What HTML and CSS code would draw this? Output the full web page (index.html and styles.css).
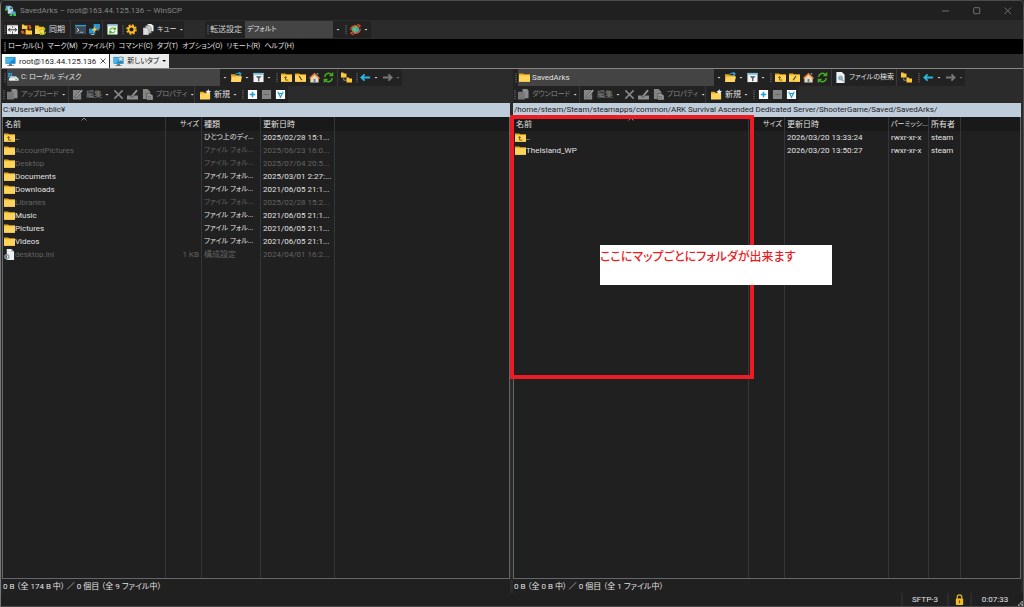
FILE: index.html
```html
<!DOCTYPE html>
<html lang="ja">
<head>
<meta charset="utf-8">
<title>SavedArks – root@163.44.125.136 – WinSCP</title>
<link rel="stylesheet" href="styles.css">
</head>
<body>
<svg class="defs" aria-hidden="true">
  <symbol id="app" viewBox="0 0 12 12"><rect x="1" y="1" width="5" height="4" fill="#7ebbe5" stroke="#2d6fa5" stroke-width=".7"/><path d="M4 5V3.800a2 2 0 0 1 4 0V5" fill="none" stroke="#d8e4ea" stroke-width="1"/><rect x="3" y="4.500" width="6" height="5" fill="#bdd5e5"/><rect x="7" y="7" width="4.500" height="3.500" fill="#4aa8df"/><path d="M0 4h3v2H0zM5 10h3v2H5zM10 9h2v3h-3z" fill="#48c93e"/></symbol>
  <symbol id="split" viewBox="0 0 12 12"><rect x="0" y="1" width="12" height="10" fill="#f4f4f4"/><path d="M0 1h12v1.500H0z" fill="#b5bcc0"/><path d="M6 2.500v2M6 8v3" stroke="#444" stroke-width=".8"/><path d="M1.500 6.300h9M3.500 4.300l-2 2 2 2M8.500 4.300l2 2-2 2" fill="none" stroke="#222" stroke-width="1"/></symbol>
  <symbol id="syncdirs" viewBox="0 0 12 12"><path d="M1 .500h2l1 1h3v4H1zM5 6h2l1 1h4v4.500H5z" fill="#ffc93a"/><path d="M7 2h3v3M11 3.500L10 5 8.500 3.500M4 10H1.500V7.500M0 9l1.500-1.500L3 9" fill="none" stroke="#e05a16" stroke-width="1.500"/></symbol>
  <symbol id="syncfold" viewBox="0 0 12 12"><path d="M0 1.500h4l1 1.500h5v8H0z" fill="#f3b81f"/><path d="M0 5h10v6H0z" fill="#ffd65a"/><path d="M5 8a3 3 0 0 1 5-2M11.500 8.500a3 3 0 0 1-5 2M10.500 4v2.300H8.500M6 12V10h2" fill="none" stroke="#a4c820" stroke-width="1.300"/></symbol>
  <symbol id="term" viewBox="0 0 12 12"><rect y="1" width="12" height="10" fill="#3d4b59"/><rect y="1" width="12" height="1.500" fill="#2f9bd0"/><path d="M2 4.500l2.300 2L2 8.500" fill="none" stroke="#e5edf2"/><path d="M5 9h4" stroke="#aab5bd"/></symbol>
  <symbol id="putty" viewBox="0 0 12 12"><rect x="5" y="0" width="7" height="5.500" fill="#2b8fd0"/><rect x="0" y="5" width="7" height="5.500" fill="#2b8fd0"/><path d="M8 6.500h3M2 11.500h4" stroke="#b9c4cc"/><path d="M8 1L3 7h3l-2 4 5-6H6z" fill="#ffd22e"/></symbol>
  <symbol id="refreshbox" viewBox="0 0 12 12"><rect x=".5" y=".5" width="11" height="11" fill="#f5f8f1"/><path d="M.5.500h11v2H.5z" fill="#9bc8e0"/><path d="M3 6.500C4 4 7 4 8.500 5M9 7.500C8 10 5 10 3.500 9M9 3.500V6H7M3 10.500V8h2" fill="none" stroke="#48b12b" stroke-width="1.200"/></symbol>
  <symbol id="gear" viewBox="0 0 12 12"><circle cx="6" cy="6" r="4.800" fill="none" stroke="#f6b51e" stroke-width="2" stroke-dasharray="2 1.770"/><circle cx="6" cy="6" r="3.300" fill="none" stroke="#f9bd27" stroke-width="2"/></symbol>
  <symbol id="copies" viewBox="0 0 12 12"><path d="M5 0h4l2.500 2v6H5z" fill="#eee"/><path d="M2.500 2H7l2 2v6H2.500z" fill="#ccc" stroke="#555" stroke-width=".5"/><path d="M0 4h4l2.500 2v6H0z" fill="#ddd" stroke="#555" stroke-width=".5"/></symbol>
  <symbol id="globe" viewBox="0 0 12 12"><circle cx="6" cy="6" r="4" fill="#35a9d7"/><path d="M4 3l3-.500 1 2-2 1 1 2-1.500 2L3 7z" fill="#58c455"/><path d="M1 7C.5 4 3 1 8 1.800M11 5c.5 3-2 6-7 5.200M8 0l3 2-3 2.500M4 12l-3-2 3-2.500" fill="none" stroke="#e24c17" stroke-width="1.400"/></symbol>
  <symbol id="monitor" viewBox="0 0 12 12"><rect x=".5" y="1" width="11" height="7.500" fill="#168acb"/><path d="M1 1.500h10L4 8H1z" fill="#4bb5e8"/><path d="M4.500 8.500h3v1.500h2v1h-7v-1h2z" fill="#65727a"/></symbol>
  <symbol id="monitornew" viewBox="0 0 12 12"><rect x=".5" y="1" width="11" height="7.500" fill="#168acb"/><path d="M1 1.500h6L4 8H1z" fill="#4bb5e8"/><path d="M4.500 8.500h3v1.500h2v1h-7v-1h2z" fill="#65727a"/><path d="M8.500 0l1 2 2.300.3-1.600 1.500.4 2.200-2.100-1L6.400 6l.4-2.200L5.200 2.300 7.500 2z" fill="#d3d9dc" stroke="#8b969c" stroke-width=".4"/></symbol>
  <symbol id="drive" viewBox="0 0 12 12"><path d="M0 1h2v2H0zM2.500 1h2v2h-2zM0 3.500h2v2H0zM2.500 3.500h2v2h-2z" fill="#23a8e8"/><path d="M3 4.500h6l2.500 3H1z" fill="#cbd3d7"/><rect x="1" y="7" width="10.500" height="2.500" fill="#eef1f2"/><path d="M8 8.300h2" stroke="#3cad49"/></symbol>
  <symbol id="folder" viewBox="0 0 12 12"><path d="M0 1.500h4.500l1 1H12V10.500H0z" fill="#e9ab18"/><path d="M0 3.500h12v7H0z" fill="#ffd45c"/></symbol>
  <symbol id="folderup" viewBox="0 0 12 12"><path d="M0 1.500h4.500l1 1H12V10.500H0z" fill="#e9ab18"/><path d="M0 3.500h12v7H0z" fill="#ffd45c"/><path d="M5 5v3.800h3M3.500 6.500L5 5l1.500 1.500" fill="none" stroke="#6f5311" stroke-width="1"/></symbol>
  <symbol id="folderroot" viewBox="0 0 12 12"><path d="M0 1.500h4.500l1 1H12V10.500H0z" fill="#e9ab18"/><path d="M0 3.500h12v7H0z" fill="#ffd45c"/><path d="M4.500 4.500l3 4.500" stroke="#594006" stroke-width="1.200"/></symbol>
  <symbol id="folderslash" viewBox="0 0 12 12"><path d="M0 1.500h4.500l1 1H12V10.500H0z" fill="#e9ab18"/><path d="M0 3.500h12v7H0z" fill="#ffd45c"/><path d="M7.500 4.500l-3 4.500" stroke="#594006" stroke-width="1.200"/></symbol>
  <symbol id="openfolder" viewBox="0 0 12 12"><path d="M0 2.500h4l1 1h6v7.500H0z" fill="#e3a318"/><path d="M1.500 5H12l-1.500 6H0z" fill="#ffd568"/><path d="M5 3c1-2 3-2 5-1M8.500 0L11 2 8.500 4" fill="none" stroke="#2799ce" stroke-width="1.300"/></symbol>
  <symbol id="filter" viewBox="0 0 12 12"><rect x=".5" y="1" width="11" height="10" fill="#f3f3f3"/><path d="M.5 1h11v2H.5z" fill="#72bddd"/><path d="M3 4.500h6.500L7 7.200v3H5.500v-3z" fill="#51616b"/></symbol>
  <symbol id="home" viewBox="0 0 12 12"><path d="M1.500 5.500L6 1.500l4.500 4v6h-9z" fill="#f0d7b2"/><path d="M0 6.500L6 .8l6 5.700-1 1-5-4.500-5 4.500z" fill="#e47a31"/><path d="M5 7.500h2v4H5z" fill="#3a89b8"/><path d="M8.500 1H10v2.500L8.500 2z" fill="#5aa5d0"/></symbol>
  <symbol id="reload" viewBox="0 0 12 12"><path d="M2 5.500A4.200 4.200 0 0 1 9.500 3M10 6.500A4.200 4.200 0 0 1 2.500 9M10.500.500v3.300H7M1.500 11.500V8.200H5" fill="none" stroke="#46ad1e" stroke-width="1.500"/></symbol>
  <symbol id="tree" viewBox="0 0 12 12"><path d="M0 .5h2.500l.5 1h3V6H0zM6 6h2.500l.5 1h3v4.500H6z" fill="#ffc83a"/><path d="M3 6v3h3" fill="none" stroke="#a6a6a6" stroke-width=".8"/></symbol>
  <symbol id="back" viewBox="0 0 12 12"><path d="M1.500 6H11M5 2.500L1.500 6 5 9.500" fill="none" stroke="#28b5dc" stroke-width="2"/></symbol>
  <symbol id="forward" viewBox="0 0 12 12"><path d="M1 6h9.500M7 2.500L10.500 6 7 9.500" fill="none" stroke="#777" stroke-width="2"/></symbol>
  <symbol id="find" viewBox="0 0 12 12"><path d="M1.500 0h6l3 3v9h-9z" fill="#eff2f4"/><circle cx="6" cy="6.500" r="2.200" fill="#79bedb" stroke="#8b969c" stroke-width=".8"/><path d="M7.500 8l2 2.500" stroke="#8b969c" stroke-width="1.200"/></symbol>
  <symbol id="transfer" viewBox="0 0 12 12"><path d="M5 0h5l1.500 2v8H5z" fill="#8b8b8b"/><path d="M0 3h6l1.500 2v6.500H0z" fill="#777"/></symbol>
  <symbol id="edit" viewBox="0 0 12 12"><path d="M1 1h9v10.500H1z" fill="#858585"/><path d="M3 8.500L10.500.500 12 2 5 9.500z" fill="#aaa" stroke="#333" stroke-width=".7"/></symbol>
  <symbol id="cross" viewBox="0 0 12 12"><path d="M1.500 1.500l9 9M10.500 1.500l-9 9" stroke="#878787" stroke-width="1.700"/></symbol>
  <symbol id="rename" viewBox="0 0 12 12"><path d="M0 7h12v4.500H0z" fill="#8b8b8b"/><path d="M4 8l6-7.500L12 2 6 9z" fill="#999" stroke="#333" stroke-width=".7"/></symbol>
  <symbol id="props" viewBox="0 0 12 12"><path d="M1 0h5l3 3v8H1z" fill="#858585"/><path d="M5 5h4l3 2v5H5z" fill="#9a9a9a" stroke="#333" stroke-width=".5"/><path d="M6 8h4M6 10h4" stroke="#555" stroke-width=".7"/></symbol>
  <symbol id="newfolder" viewBox="0 0 12 12"><path d="M0 3h4l1 1h6v7H0z" fill="#e9ab18"/><path d="M0 5h11v6.500H0z" fill="#ffd45c"/><path d="M9 0l.8 2 2.200.2-1.500 1.500.4 2.300L9 5 7.200 6l.3-2.300L6 2.200 8.200 2z" fill="#eee"/></symbol>
  <symbol id="plus" viewBox="0 0 12 12"><path d="M1 1h10v10H1z" fill="#fff"/><path d="M6 3v6M3 6h6" stroke="#1c9fd3" stroke-width="1.700"/></symbol>
  <symbol id="minus" viewBox="0 0 12 12"><path d="M1 1h10v10H1z" fill="#858585"/><path d="M3 6h6" stroke="#666" stroke-width="1"/></symbol>
  <symbol id="invert" viewBox="0 0 12 12"><path d="M1 1h10v10H1z" fill="#fff"/><path d="M3 3l3 6 3-6M4 5h4" fill="none" stroke="#1c9fd3" stroke-width="1.200"/></symbol>
  <symbol id="inifile" viewBox="0 0 12 12"><path d="M3 0h5l3 3v9H3z" fill="#edf1f4"/><path d="M8 0v3h3" fill="#aab3b9"/><circle cx="3.200" cy="8.500" r="2.200" fill="none" stroke="#94a0a8" stroke-width="1.600"/></symbol>
  <symbol id="lock" viewBox="0 0 12 12"><path d="M3.500 6V3.500a2.500 2.500 0 0 1 5 0V6" fill="none" stroke="#e2b72e" stroke-width="1.300"/><rect x="2" y="5" width="8" height="7" rx="1" fill="#f5bd24"/><path d="M6 7v3" stroke="#704d00" stroke-width="1.300"/></symbol>
</svg>

<div class="window">
  <header class="titlebar">
    <svg class="icon"><use href="#app"/></svg>
    <h1 class="title">SavedArks – root@163.44.125.136 – WinSCP</h1>
    <div class="window-buttons">
      <button aria-label="最小化"><svg viewBox="0 0 8 8"><path d="M0 4h7"/></svg></button>
      <button aria-label="最大化"><svg viewBox="0 0 8 8"><rect x=".7" y=".7" width="6" height="6" rx=".7"/></svg></button>
      <button aria-label="閉じる"><svg viewBox="0 0 8 8"><path d="M.5.500l6.500 6.500M7 .500L.5 7"/></svg></button>
    </div>
  </header>

  <div class="toolbar main-toolbar">
    <i class="grip"></i>
    <button aria-label="比較"><svg class="icon"><use href="#split"/></svg></button>
    <button aria-label="ディレクトリの同期"><svg class="icon"><use href="#syncdirs"/></svg></button>
    <button><svg class="icon"><use href="#syncfold"/></svg>同期</button>
    <i class="sep"></i>
    <button aria-label="ターミナル"><svg class="icon"><use href="#term"/></svg></button>
    <button aria-label="PuTTY"><svg class="icon"><use href="#putty"/></svg></button>
    <i class="sep"></i>
    <button aria-label="更新"><svg class="icon"><use href="#refreshbox"/></svg></button>
    <i class="grip"></i>
    <button aria-label="環境設定"><svg class="icon"><use href="#gear"/></svg></button>
    <button class="kana"><svg class="icon"><use href="#copies"/></svg>キュー<i class="caret push"></i></button>
    <i class="gap"></i>
    <i class="grip"></i>
    <label for="preset">転送設定</label>
    <div class="combo"><select id="preset" class="kana"><option>デフォルト</option></select><i class="caret"></i></div>
    <i class="grip"></i>
    <button aria-label="ブラウズの同期"><svg class="icon"><use href="#globe"/></svg><i class="caret"></i></button>
  </div>

  <nav class="menubar kana">
    <i class="grip"></i>
    <button>ローカル(L)</button><button>マーク(M)</button><button>ファイル(F)</button><button>コマンド(C)</button><button>タブ(T)</button><button>オプション(O)</button><button>リモート(R)</button><button>ヘルプ(H)</button>
  </nav>

  <div class="tabs">
    <button class="tab active"><svg class="icon"><use href="#monitor"/></svg>root@163.44.125.136<svg class="close" viewBox="0 0 6 6"><path d="M.5.500l5 5M5.500.500l-5 5"/></svg></button>
    <button class="tab kana"><svg class="icon"><use href="#monitornew"/></svg>新しいタブ<i class="caret dark"></i></button>
  </div>

  <main class="panes">
    <section class="pane">
      <div class="toolbar nav-toolbar">
        <i class="grip"></i>
        <div class="combo"><svg class="icon"><use href="#drive"/></svg><select class="kana" aria-label="ドライブ"><option>C: ローカル ディスク</option></select><i class="caret"></i></div>
        <button aria-label="開く"><svg class="icon"><use href="#openfolder"/></svg><i class="caret"></i></button>
        <button aria-label="フィルター"><svg class="icon"><use href="#filter"/></svg><i class="caret"></i></button>
        <i class="grip"></i>
        <button aria-label="親ディレクトリ"><svg class="icon"><use href="#folderup"/></svg></button>
        <button aria-label="ルート"><svg class="icon"><use href="#folderroot"/></svg></button>
        <button aria-label="ホーム"><svg class="icon"><use href="#home"/></svg></button>
        <button aria-label="更新"><svg class="icon"><use href="#reload"/></svg></button>
        <i class="sep"></i>
        <button aria-label="ツリー"><svg class="icon"><use href="#tree"/></svg></button>
        <i class="grip"></i>
        <button aria-label="戻る"><svg class="icon"><use href="#back"/></svg><i class="caret"></i></button>
        <button aria-label="進む"><svg class="icon"><use href="#forward"/></svg><i class="caret dim"></i></button>
      </div>
      <div class="toolbar file-toolbar">
        <i class="grip"></i>
        <button class="off kana"><svg class="icon"><use href="#transfer"/></svg>アップロード<i class="caret push"></i></button>
        <i class="sep"></i>
        <button class="off"><svg class="icon"><use href="#edit"/></svg>編集<i class="caret push"></i></button>
        <button aria-label="削除"><svg class="icon"><use href="#cross"/></svg></button>
        <button aria-label="名前の変更"><svg class="icon"><use href="#rename"/></svg></button>
        <button class="off kana"><svg class="icon"><use href="#props"/></svg>プロパティ<i class="caret push"></i></button>
        <i class="sep"></i>
        <button><svg class="icon"><use href="#newfolder"/></svg>新規<i class="caret push"></i></button>
        <i class="grip"></i>
        <button aria-label="選択"><svg class="icon"><use href="#plus"/></svg></button>
        <button aria-label="選択解除"><svg class="icon"><use href="#minus"/></svg></button>
        <button aria-label="選択の反転"><svg class="icon"><use href="#invert"/></svg></button>
      </div>
      <div class="path">C:¥Users¥Public¥</div>
      <div class="listing">
        <table class="files local">
          <colgroup><col class="c-name"><col class="c-size"><col class="c-kind"><col class="c-date"><col></colgroup>
          <thead><tr><th class="sorted">名前<svg class="sort" viewBox="0 0 6 4"><path d="M.5 3.500L3 1l2.500 2.500"/></svg></th><th class="num kana">サイズ</th><th>種類</th><th>更新日時</th><th></th></tr></thead>
          <tbody>
            <tr><td><span class="entry"><svg class="icon"><use href="#folderup"/></svg>..</span></td><td></td><td class="kana">ひとつ上のディ...</td><td>2025/02/28 15:1...</td><td></td></tr>
            <tr class="hidden-file"><td><span class="entry"><svg class="icon"><use href="#folder"/></svg>AccountPictures</span></td><td></td><td class="kana">ファイル フォル...</td><td>2025/06/23 16:0...</td><td></td></tr>
            <tr class="hidden-file"><td><span class="entry"><svg class="icon"><use href="#folder"/></svg>Desktop</span></td><td></td><td class="kana">ファイル フォル...</td><td>2025/07/04 20:5...</td><td></td></tr>
            <tr><td><span class="entry"><svg class="icon"><use href="#folder"/></svg>Documents</span></td><td></td><td class="kana">ファイル フォル...</td><td>2025/03/01 2:27:...</td><td></td></tr>
            <tr><td><span class="entry"><svg class="icon"><use href="#folder"/></svg>Downloads</span></td><td></td><td class="kana">ファイル フォル...</td><td>2021/06/05 21:1...</td><td></td></tr>
            <tr class="hidden-file"><td><span class="entry"><svg class="icon"><use href="#folder"/></svg>Libraries</span></td><td></td><td class="kana">ファイル フォル...</td><td>2025/02/28 15:2...</td><td></td></tr>
            <tr><td><span class="entry"><svg class="icon"><use href="#folder"/></svg>Music</span></td><td></td><td class="kana">ファイル フォル...</td><td>2021/06/05 21:1...</td><td></td></tr>
            <tr><td><span class="entry"><svg class="icon"><use href="#folder"/></svg>Pictures</span></td><td></td><td class="kana">ファイル フォル...</td><td>2021/06/05 21:1...</td><td></td></tr>
            <tr><td><span class="entry"><svg class="icon"><use href="#folder"/></svg>Videos</span></td><td></td><td class="kana">ファイル フォル...</td><td>2021/06/05 21:1...</td><td></td></tr>
            <tr class="hidden-file"><td><span class="entry"><svg class="icon"><use href="#inifile"/></svg>desktop.ini</span></td><td class="num">1 KB</td><td>構成設定</td><td>2024/04/01 16:2...</td><td></td></tr>
            <tr class="filler"><td></td><td></td><td></td><td></td><td></td></tr>
          </tbody>
        </table>
      </div>
      <div class="pane-status">0 B （全 174 B 中） ／ 0 個目 （全 9 ファイル中）</div>
    </section>

    <section class="pane remote-pane">
      <div class="toolbar nav-toolbar remote-nav">
        <i class="grip"></i>
        <div class="combo"><svg class="icon"><use href="#folder"/></svg><select aria-label="ディレクトリ"><option>SavedArks</option></select><i class="caret"></i></div>
        <button aria-label="開く"><svg class="icon"><use href="#openfolder"/></svg><i class="caret"></i></button>
        <button aria-label="フィルター"><svg class="icon"><use href="#filter"/></svg><i class="caret"></i></button>
        <i class="grip"></i>
        <button aria-label="親ディレクトリ"><svg class="icon"><use href="#folderup"/></svg></button>
        <button aria-label="ルート"><svg class="icon"><use href="#folderslash"/></svg></button>
        <button aria-label="ホーム"><svg class="icon"><use href="#home"/></svg></button>
        <button aria-label="更新"><svg class="icon"><use href="#reload"/></svg></button>
        <i class="sep"></i>
        <button class="kana"><svg class="icon"><use href="#find"/></svg>ファイルの検索</button>
        <i class="sep"></i>
        <button aria-label="ツリー"><svg class="icon"><use href="#tree"/></svg></button>
        <i class="grip"></i>
        <button aria-label="戻る"><svg class="icon"><use href="#back"/></svg><i class="caret"></i></button>
        <button aria-label="進む"><svg class="icon"><use href="#forward"/></svg><i class="caret dim"></i></button>
      </div>
      <div class="toolbar file-toolbar">
        <i class="grip"></i>
        <button class="off kana"><svg class="icon"><use href="#transfer"/></svg>ダウンロード<i class="caret push"></i></button>
        <i class="sep"></i>
        <button class="off"><svg class="icon"><use href="#edit"/></svg>編集<i class="caret push"></i></button>
        <button aria-label="削除"><svg class="icon"><use href="#cross"/></svg></button>
        <button aria-label="名前の変更"><svg class="icon"><use href="#rename"/></svg></button>
        <button class="off kana"><svg class="icon"><use href="#props"/></svg>プロパティ<i class="caret push"></i></button>
        <i class="sep"></i>
        <button><svg class="icon"><use href="#newfolder"/></svg>新規<i class="caret push"></i></button>
        <i class="grip"></i>
        <button aria-label="選択"><svg class="icon"><use href="#plus"/></svg></button>
        <button aria-label="選択解除"><svg class="icon"><use href="#minus"/></svg></button>
        <button aria-label="選択の反転"><svg class="icon"><use href="#invert"/></svg></button>
      </div>
      <div class="path">/home/steam/Steam/steamapps/common/ARK Survival Ascended Dedicated Server/ShooterGame/Saved/SavedArks/</div>
      <div class="listing">
        <table class="files remote">
          <colgroup><col class="c-name"><col class="c-size"><col class="c-date"><col class="c-perm"><col class="c-owner"><col></colgroup>
          <thead><tr><th class="sorted">名前<svg class="sort" viewBox="0 0 6 4"><path d="M.5 3.500L3 1l2.500 2.500"/></svg></th><th class="num kana">サイズ</th><th>更新日時</th><th class="kana">パーミッシ...</th><th>所有者</th><th></th></tr></thead>
          <tbody>
            <tr><td><span class="entry"><svg class="icon"><use href="#folderup"/></svg>..</span></td><td></td><td>2026/03/20 13:33:24</td><td>rwxr-xr-x</td><td>steam</td><td></td></tr>
            <tr><td><span class="entry"><svg class="icon"><use href="#folder"/></svg>TheIsland_WP</span></td><td></td><td>2026/03/20 13:50:27</td><td>rwxr-xr-x</td><td>steam</td><td></td></tr>
            <tr class="filler"><td></td><td></td><td></td><td></td><td></td><td></td></tr>
          </tbody>
        </table>
        <div class="highlight"></div>
        <p class="note">ここにマップごとにフォルダが出来ます</p>
      </div>
      <div class="pane-status">0 B （全 0 B 中） ／ 0 個目 （全 1 ファイル中）</div>
    </section>
  </main>

  <footer class="statusbar">
    <span class="protocol">SFTP-3</span>
    <span class="secure"><svg class="icon"><use href="#lock"/></svg></span>
    <span class="elapsed">0:07:33</span>
    <svg class="resize" viewBox="0 0 6 6"><path d="M4 0h2v2H4zM2 2h2v2H2zM4 3h2v3H4zM0 4h2v2H0z"/></svg>
  </footer>
</div>
</body>
</html>
```

FILE: styles.css
```css
* { box-sizing: border-box; }

body {
  margin: 0;
  background: #2b2b2b;
  color: #e0e0e0;
  font: 8px/13px Roboto, "Noto Sans CJK JP", sans-serif;
  font-feature-settings: "palt";
}

button, select {
  margin: 0;
  padding: 0;
  border: 0;
  background: none;
  color: inherit;
  font: inherit;
  font-feature-settings: inherit;
  white-space: nowrap;
}

.defs { position: absolute; width: 0; height: 0; }
.icon { width: 11px; height: 11px; flex: none; display: block; }
.kana { font-size: 7px; }

.window {
  display: flex;
  flex-direction: column;
  height: 100vh;
  border: 1px solid #4b4b4b;
  border-left-color: #777;
  border-radius: 5px 5px 0 0;
  background: #2b2b2b;
  overflow: hidden;
}

.titlebar {
  display: flex;
  align-items: center;
  gap: 4px;
  height: 19px;
  padding-left: 4px;
  background: #202020;
}
.title { margin: 0; flex: 1; font-size: 8px; font-weight: 400; color: #858585; }
.window-buttons { display: flex; }
.window-buttons button { width: 31px; height: 19px; display: grid; place-items: center; }
.window-buttons svg { width: 8px; height: 8px; fill: none; stroke: #6f6f6f; }

.toolbar { display: grid; grid-template-rows: 100%; justify-content: start; }
.toolbar > * { background: #222; }
.toolbar > .gap { background: none; }
.toolbar button { display: flex; align-items: center; gap: 3px; padding-left: 1px; }
.toolbar .off { color: #858585; }
.toolbar label { display: flex; align-items: center; color: #d0d0d0; }

.toolbar > .grip, .grip { background: repeating-linear-gradient(#484848 0 1px, #2b2b2b 1px 2px) center / 2px 10px no-repeat #222; }
.sep { border-left: 1px solid #383838; }
.caret {
  width: 4px;
  height: 2px;
  flex: none;
  background: #ddd;
  clip-path: polygon(0 0, 100% 0, 50% 100%);
}
.caret.dim { background: #777; }
.caret.dark { background: #111; }
.push { margin-left: auto; margin-right: 3px; }

.main-toolbar {
  grid-template-columns: 3px 14px 14px 36px 4px 14px 14px 4px 14px 5px 17px 42px 21px 5px 35px 98px 6px 22px;
  height: 19px;
  padding: 1px 0 1px 2px;
}

.combo { display: flex; align-items: center; padding-right: 3px; }
.combo select { flex: 1; align-self: stretch; padding-left: 2px; background: #444; appearance: none; outline: 0; }
.combo .icon { width: 12px; align-self: stretch; height: auto; background: #444; padding-left: 1px; }
.combo .caret { margin-left: 3px; }

.menubar { display: flex; align-items: stretch; gap: 4px; height: 15px; padding-left: 2px; background: #000; }
.menubar .grip { width: 3px; margin-right: -2px; background-color: #000; }

.tabs { display: flex; align-items: stretch; gap: 1px; height: 15px; padding-left: 1px; border-bottom: 1px solid #858585; }
.tab { display: flex; align-items: center; gap: 3px; padding: 0 3px; background: #eaeaea; color: #222; }
.tab.active { background: #fff; }
.close { width: 6px; height: 6px; margin-left: 1px; stroke: #555; fill: none; }

.panes { flex: 1; min-height: 0; display: grid; grid-template-columns: 1fr 1fr; gap: 3px; padding: 0 2px 0 1px; }
.pane { display: flex; flex-direction: column; min-width: 0; }

.nav-toolbar {
  grid-template-columns: 5px 223px 22px 21px 7px 14px 14px 14px 15px 3px 15px 4px 22px 21px;
  height: 17px;
}
.nav-toolbar.remote-nav {
  grid-template-columns: 5px 206px 22px 22px 6px 14px 14px 14px 15px 3px 62px 4px 16px 6px 22px 21px;
}
.file-toolbar {
  grid-template-columns: 4px 62px 3px 41px 14px 15px 53px 5px 41px 6px 14px 14px 14px;
  height: 17px;
}

.path { height: 14px; padding-left: 1px; background: #bfcddb; color: #222; white-space: nowrap; overflow: hidden; }

.listing {
  position: relative;
  flex: 1;
  min-height: 0;
  border: 1px solid #62676b;
  border-top: 0;
  background: #202020;
}
.files { width: 100%; height: 100%; table-layout: fixed; border-collapse: separate; border-spacing: 0; }
.files th, .files td { height: 13px; padding: 0 0 0 2px; border-right: 1px solid #33373a; text-align: left; font-weight: 400; white-space: nowrap; overflow: hidden; }
.files td:first-child { padding-left: 1px; }
.files th { height: 14px; background: #191919; }
.files th:last-child, .files td:last-child { border-right: 0; }
.files .num { padding-right: 2px; text-align: right; }
.files .filler td { height: auto; }
.files .sorted { position: relative; }
.sort { position: absolute; top: 0; left: 50%; width: 6px; height: 4px; margin-left: -3px; fill: none; stroke: #888; stroke-width: 1; }
.entry { display: flex; align-items: center; }
.hidden-file { color: #636363; }
.c-name { width: 163px; }
.c-size { width: 36px; }
.c-kind { width: 59px; }
.c-date { width: 74px; }
.remote .c-name { width: 235px; }
.remote .c-date { width: 104px; }
.c-perm { width: 40px; }
.c-owner { width: 32px; }

/* Annotation drawn over the remote listing */
.highlight { position: absolute; top: -2px; left: -4px; width: 244px; height: 264px; border: 4px solid #ed1c24; }
.note {
  position: absolute;
  top: 128px;
  left: 86px;
  width: 232px;
  height: 40px;
  margin: 0;
  padding-top: 4px;
  background: #fff;
  color: #ed1c24;
  font-size: 12px;
  font-weight: 500;
  line-height: 16px;
  white-space: nowrap;
}

.pane-status { height: 14px; padding: 1px 1px 0; background: #202020; white-space: nowrap; }

.statusbar { display: flex; align-items: stretch; justify-content: flex-end; height: 13px; background: #202020; }
.statusbar span { display: grid; place-items: center; border-left: 2px solid #2b2b2b; }
.protocol { width: 46px; }
.secure { width: 23px; }
.elapsed { width: 48px; }
.resize { width: 5px; height: 5px; align-self: end; fill: #999; }
```
